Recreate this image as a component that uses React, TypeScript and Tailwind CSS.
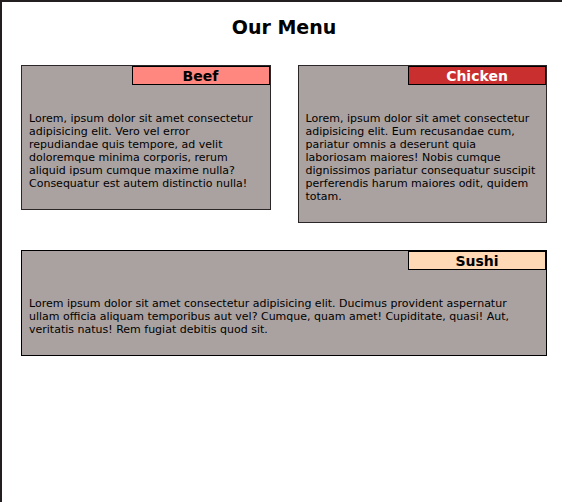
type MenuItem = {
  name: string;
  text: string;
  badge: string;
  card: string;
};

const items: MenuItem[] = [
  {
    name: "Beef",
    text: "Lorem, ipsum dolor sit amet consectetur adipisicing elit. Vero vel error repudiandae quis tempore, ad velit doloremque minima corporis, rerum aliquid ipsum cumque maxime nulla? Consequatur est autem distinctio nulla!",
    badge: "bg-[#ff877f] text-black",
    card: "border-[#2b2728]",
  },
  {
    name: "Chicken",
    text: "Lorem, ipsum dolor sit amet consectetur adipisicing elit. Eum recusandae cum, pariatur omnis a deserunt quia laboriosam maiores! Nobis cumque dignissimos pariatur consequatur suscipit perferendis harum maiores odit, quidem totam.",
    badge: "bg-[#ca2f2f] text-white",
    card: "border-[#2b2728]",
  },
  {
    name: "Sushi",
    text: "Lorem ipsum dolor sit amet consectetur adipisicing elit. Ducimus provident aspernatur ullam officia aliquam temporibus aut vel? Cumque, quam amet! Cupiditate, quasi! Aut, veritatis natus! Rem fugiat debitis quod sit.",
    badge: "bg-[#ffd8b5] text-black",
    card: "col-span-2 border-black",
  },
];

function MenuCard({ item }: { item: MenuItem }) {
  return (
    <section className={`border bg-[#aaa2a0] ${item.card}`}>
      <h2
        className={`ml-auto w-[138px] border border-black pt-px text-center text-sm leading-4 font-bold ${item.badge}`}
      >
        {item.name}
      </h2>
      <p className="pt-[27px] pr-[9px] pb-[19px] pl-[7px] text-[11px] leading-[13px]">{item.text}</p>
    </section>
  );
}

export default function App() {
  return (
    <main className="min-h-screen border-t-2 border-l-2 border-[#231f20] bg-white pr-[15px] pl-[19px] font-['Verdana','DejaVu_Sans',sans-serif] text-black">
      <h1 className="pt-3 pb-6 text-center text-[19px] leading-[27px] font-bold">Our Menu</h1>
      <div className="grid grid-cols-2 items-start gap-[27px]">
        {items.map((item) => (
          <MenuCard key={item.name} item={item} />
        ))}
      </div>
    </main>
  );
}
